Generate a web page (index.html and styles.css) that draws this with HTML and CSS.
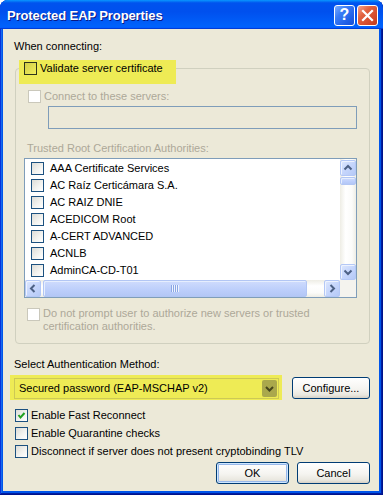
FILE: index.html
```html
<!DOCTYPE html>
<html lang="en">
<head>
    <meta charset="UTF-8">
    <title>Protected EAP Properties</title>
    <link rel="stylesheet" href="styles.css">
</head>
<body>
    <div class="window">
        <div class="titlebar">
            <span class="title">Protected EAP Properties</span>
            <div class="caption-buttons">
                <span class="cap-btn help">?</span>
                <span class="cap-btn close">
                    <svg width="19" height="19" viewBox="0 0 19 19"><path d="M5 5 L14 14 M14 5 L5 14" stroke="#fff" stroke-width="2.2" stroke-linecap="square"/></svg>
                </span>
            </div>
        </div>

        <div class="client">
            <div class="label first">When connecting:</div>

            <fieldset class="group">
                <legend><span class="highlight legend-hl"><span class="check"></span>Validate server certificate</span></legend>

                <div class="check-row disabled"><span class="check"></span>Connect to these servers:</div>
                <div class="textbox"></div>

                <div class="label disabled trusted-label">Trusted Root Certification Authorities:</div>
                <div class="listbox">
                    <div class="list-items">
                        <div class="list-item"><span class="check"></span>AAA Certificate Services</div>
                        <div class="list-item"><span class="check"></span>AC Raíz Certicámara S.A.</div>
                        <div class="list-item"><span class="check"></span>AC RAIZ DNIE</div>
                        <div class="list-item"><span class="check"></span>ACEDICOM Root</div>
                        <div class="list-item"><span class="check"></span>A-CERT ADVANCED</div>
                        <div class="list-item"><span class="check"></span>ACNLB</div>
                        <div class="list-item"><span class="check"></span>AdminCA-CD-T01</div>
                    </div>
                    <div class="vscroll">
                        <span class="sb-btn"><svg width="14" height="14" viewBox="0 0 14 14"><polyline points="3.5,8.5 7,5 10.5,8.5" fill="none" stroke="#4d6185" stroke-width="2"/></svg></span>
                        <span class="sb-thumb vthumb"></span>
                        <span class="sb-track"></span>
                        <span class="sb-btn"><svg width="14" height="14" viewBox="0 0 14 14"><polyline points="3.5,5.5 7,9 10.5,5.5" fill="none" stroke="#4d6185" stroke-width="2"/></svg></span>
                    </div>
                    <div class="hscroll">
                        <span class="sb-btn"><svg width="14" height="15" viewBox="0 0 14 15"><polyline points="8.5,4 5,7.5 8.5,11" fill="none" stroke="#4d6185" stroke-width="2"/></svg></span>
                        <span class="sb-thumb hthumb"></span>
                        <span class="sb-track"></span>
                        <span class="sb-btn"><svg width="14" height="15" viewBox="0 0 14 15"><polyline points="5.5,4 9,7.5 5.5,11" fill="none" stroke="#4d6185" stroke-width="2"/></svg></span>
                    </div>
                    <div class="sb-corner"></div>
                </div>

                <div class="check-row disabled prompt-row"><span class="check"></span><span>Do not prompt user to authorize new servers or trusted certification authorities.</span></div>
            </fieldset>

            <div class="label auth-label">Select Authentication Method:</div>
            <div class="auth-row">
                <div class="highlight combo-hl">
                    <div class="combo">
                        <span class="combo-text">Secured password (EAP-MSCHAP v2)</span>
                        <span class="combo-btn"><svg width="13" height="13" viewBox="0 0 13 13"><polyline points="3,5 6.5,8.5 10,5" fill="none" stroke="#46461c" stroke-width="2"/></svg></span>
                    </div>
                </div>
                <button class="btn configure">Configure...</button>
            </div>

            <div class="check-row option first-option"><span class="check checked"><svg width="11" height="11" viewBox="0 0 11 11"><polyline points="2.5,5 4.5,7.5 8.5,3" fill="none" stroke="#21a121" stroke-width="2"/></svg></span>Enable Fast Reconnect</div>
            <div class="check-row option"><span class="check"></span>Enable Quarantine checks</div>
            <div class="check-row option"><span class="check"></span>Disconnect if server does not present cryptobinding TLV</div>

            <div class="dialog-buttons">
                <button class="btn default">OK</button>
                <button class="btn">Cancel</button>
            </div>
        </div>
    </div>
</body>
</html>
```

FILE: styles.css
```css
body {
    margin: 0;
    background: #ffffff;
}

.window {
    display: flex;
    flex-direction: column;
    width: 383px;
    height: 495px;
    background: #0055ea;
    border-radius: 8px 8px 0 0;
    box-shadow: inset -1px -1px #00138c, inset 1px 0 #0831d9, inset -2px -2px #001ea0, inset 2px 0 #166aee;
}

.titlebar {
    display: flex;
    align-items: center;
    justify-content: space-between;
    height: 29px;
    padding: 0 5px 0 7px;
    background: linear-gradient(to bottom, #0997ff 0%, #0053ee 10%, #0050ee 40%, #0060fa 85%, #0062fc 92%, #005bff 95%, #003dd7 97%, #003dd7 100%);
    border-radius: 8px 8px 0 0;
}

.title {
    font: bold 13px "Liberation Sans", Arial, sans-serif;
    letter-spacing: -0.1px;
    color: #ffffff;
    text-shadow: 1px 1px #0a1883;
    padding-top: 1px;
}

.caption-buttons {
    display: flex;
    gap: 2px;
    padding-top: 1px;
}

.cap-btn {
    display: flex;
    align-items: center;
    justify-content: center;
    width: 21px;
    height: 21px;
    box-sizing: border-box;
    border: 1px solid #ffffff;
    border-radius: 3px;
}

.help {
    background: linear-gradient(135deg, #7aacff 0%, #3a7cf6 35%, #1f5ee6 75%, #1a50d2 100%);
    color: #ffffff;
    font: bold 16px "Liberation Sans", Arial, sans-serif;
}

.close {
    background: linear-gradient(135deg, #f4a48c 0%, #e2623f 35%, #d2482a 75%, #bf3a1c 100%);
}

.client {
    flex: 1;
    margin: 0 4px 4px 3px;
    padding: 11px 9px 0 11px;
    background: #ece9d8;
    font: 11px "Liberation Sans", Arial, sans-serif;
    line-height: 13px;
    color: #000000;
}

.disabled {
    color: #aca899;
}

.highlight {
    background: #eeeb55;
}

.check {
    flex: none;
    display: flex;
    align-items: center;
    justify-content: center;
    width: 13px;
    height: 13px;
    box-sizing: border-box;
    border: 1px solid #1c5180;
    background: linear-gradient(135deg, #dcdcd7 0%, #f4f4f1 60%, #ffffff 100%);
}

.check-row {
    display: flex;
    align-items: flex-start;
    gap: 3px;
}

.check-row.disabled .check {
    border-color: #cac8bb;
    background: #ffffff;
}

/* group box */
.group {
    margin: 7px 0 0 1px;
    padding: 14px 12px 10px 12px;
    border: 1px solid #d0d0bf;
    border-radius: 4px;
    min-width: 0;
}

.group legend {
    padding: 0;
    margin-left: -9px;
}

.legend-hl {
    display: flex;
    align-items: flex-start;
    gap: 3px;
    padding: 2px 13px 9px 5px;
    margin-bottom: -8px;
}

.legend-hl .check {
    border-color: #2e351c;
    background: linear-gradient(135deg, #d2cf48 0%, #f1ee5c 100%);
}

.textbox {
    height: 23px;
    margin: 3px 0 0 20px;
    box-sizing: border-box;
    border: 1px solid #7f9db9;
}

.trusted-label {
    margin: 13px 0 0 -1px;
}

/* certificate list */
.listbox {
    display: grid;
    grid-template-columns: 1fr 16px;
    grid-template-rows: 1fr 17px;
    height: 140px;
    margin: 3px 0 0 -4px;
    box-sizing: border-box;
    border: 1px solid #7f9db9;
    background: #ffffff;
}

.list-items {
    overflow: hidden;
    padding-top: 1px;
}

.list-item {
    display: flex;
    align-items: center;
    gap: 6px;
    height: 17px;
    padding-left: 6px;
    white-space: nowrap;
    line-height: 17px;
}

.vscroll {
    display: flex;
    flex-direction: column;
    background: linear-gradient(to right, #eeede5 0%, #ffffff 35%, #fbfbf9 75%, #eeede5 100%);
    padding-top: 1px;
}

.hscroll {
    display: flex;
    gap: 2px;
    background: linear-gradient(to bottom, #eeede5 0%, #ffffff 35%, #fbfbf9 75%, #eeede5 100%);
}

.sb-btn {
    display: flex;
    align-items: center;
    justify-content: center;
    flex: none;
    width: 16px;
    height: 16px;
    box-sizing: border-box;
    border: 1px solid #b4c8f6;
    border-radius: 2px;
    background: linear-gradient(135deg, #dde7fd 0%, #c6d6fc 50%, #b5c9f6 100%);
    box-shadow: inset 1px 1px #eef3fe;
}

.hscroll .sb-btn {
    height: 17px;
}

.sb-track {
    flex: 1;
}

.sb-thumb {
    flex: none;
    box-sizing: border-box;
    border: 1px solid #b2c6f4;
    border-radius: 2px;
    background: linear-gradient(to bottom, #cfdcfd 0%, #bccefb 60%, #b3c7f6 100%);
    box-shadow: inset 1px 1px #e6eefe;
}

.vthumb {
    height: 8px;
    margin-top: 1px;
}

.hthumb {
    display: flex;
    align-items: center;
    justify-content: center;
    width: 264px;
}

.hthumb::before {
    content: "";
    width: 8px;
    height: 7px;
    background: repeating-linear-gradient(to right, #8ca6e4 0 1px, #eef4fe 1px 2px);
}

.sb-corner {
    background: #f4f3ee;
}

.prompt-row {
    margin: 9px 0 0 -1px;
}

.prompt-row .check {
    margin-top: 1px;
}

/* authentication method */
.auth-label {
    margin-top: 14px;
}

.auth-row {
    display: flex;
    align-items: flex-start;
    gap: 10px;
    margin: 4px 0 0 -4px;
}

.combo-hl {
    flex: 1;
    height: 25px;
    box-sizing: border-box;
    padding: 3px 3px 0 4px;
}

.combo {
    display: flex;
    align-items: center;
    height: 21px;
    box-sizing: border-box;
    border: 1px solid #cdc955;
    padding-left: 4px;
}

.combo-text {
    flex: 1;
}

.combo-btn {
    display: flex;
    align-items: center;
    justify-content: center;
    width: 15px;
    height: 17px;
    margin-right: 1px;
    border-radius: 2px;
    background: #aaa84c;
}

.btn {
    height: 22px;
    padding: 0;
    box-sizing: border-box;
    border: 1px solid #003c74;
    border-radius: 3px;
    background: linear-gradient(to bottom, #ffffff 0%, #f5f4f0 55%, #e9e7df 85%, #d6d0c5 100%);
    font: 11px "Liberation Sans", Arial, sans-serif;
    color: #000000;
}

.configure {
    width: 78px;
    margin-top: 2px;
}

.btn.default {
    box-shadow: inset 0 0 0 1px #cee7ff, inset 0 0 0 2px #98b8ea;
}

.option {
    margin: 5px 0 0 1px;
}

.first-option {
    margin-top: 9px;
}

.dialog-buttons {
    display: flex;
    justify-content: flex-end;
    gap: 8px;
    margin-top: 4px;
}

.dialog-buttons .btn {
    width: 73px;
}
```
